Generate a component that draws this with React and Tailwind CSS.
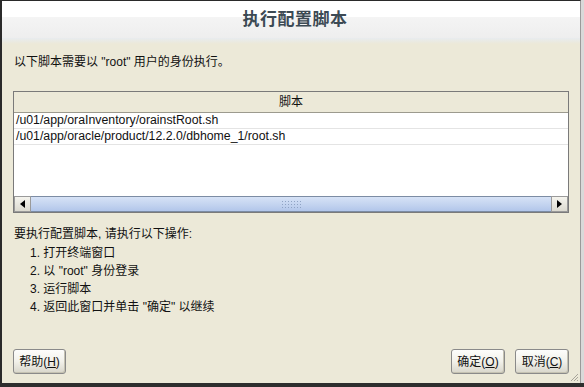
import React from 'react';

const font = { fontFamily: '"Liberation Sans", "Noto Sans CJK SC", sans-serif' };

const XpButton = ({ label, hotkey, className = '' }) => (
  <button
    className={`h-[25px] rounded-[3px] border border-[#8a8a8a] bg-gradient-to-b from-[#fdfdfb] via-[#f2f1ea] to-[#d8d6cb] text-[12px] text-[#111] shadow-[inset_-1px_-1px_0_#c5c2b2] ${className}`}
  >
    {label}(<span className="underline">{hotkey}</span>)
  </button>
);

const Arrow = ({ dir }) => (
  <div className="w-[17px] h-full flex items-center justify-center bg-gradient-to-b from-[#f5f4ee] to-[#dcdad0] border-[#9a9a9a] border">
    <svg width="5" height="8" viewBox="0 0 5 8">
      {dir === 'left' ? <path d="M5 0 L0 4 L5 8 Z" fill="#000" /> : <path d="M0 0 L5 4 L0 8 Z" fill="#000" />}
    </svg>
  </div>
);

export default function App() {
  const scripts = [
    '/u01/app/oraInventory/orainstRoot.sh',
    '/u01/app/oracle/product/12.2.0/dbhome_1/root.sh',
  ];

  return (
    <div className="w-[584px] h-[387px] bg-[#d9d9d9] overflow-hidden" style={font}>
      <div className="relative w-[581px] h-[383px] flex flex-col border-l-2 border-t border-[#2a2a2a] border-r border-r-[#9a9a9a] bg-[#ece9d8]">
        {/* Title */}
        <div className="h-[37px] flex flex-col bg-[#f1f1f1]">
          <div className="h-[16px] bg-white" />
          <div className="flex-1 bg-gradient-to-b from-[#f4f4f4] to-[#eeeeee]" />
          <div className="absolute top-0 left-0 right-0 h-[37px] flex items-center justify-center pl-[8px]">
            <span className="text-[17px] font-bold text-[#3c4a54] tracking-[0.5px]">执行配置脚本</span>
          </div>
        </div>
        <div className="h-[6px] bg-gradient-to-b from-[#e8ecef] to-[#ece9d8]" />

        {/* Body */}
        <div className="flex-1 flex flex-col px-[11px] pt-[10px] pb-[9px]">
          <p className="text-[12px] leading-[16px] text-[#111] pl-[1px]">以下脚本需要以 "root" 用户的身份执行。</p>

          <div className="mt-[21px] h-[122px] flex flex-col border border-[#7a7a7a] bg-white">
            <div className="h-[21px] flex items-center justify-center bg-[#ece9d8] border-b border-[#9c9a8e] text-[12px] text-[#111]">
              脚本
            </div>
            {scripts.map((s) => (
              <div key={s} className="h-[16px] flex items-center px-[2px] border-b border-[#e4e4e4] text-[12.3px] text-[#111]">
                {s}
              </div>
            ))}
            <div className="flex-1" />
            <div className="h-[16px] flex">
              <Arrow dir="left" />
              <div className="flex-1 flex items-center justify-center border-y border-[#7c8ca4] bg-gradient-to-b from-[#d6e2f6] via-[#c5d5f0] to-[#b2c6ea]">
                <div className="w-[20px] h-[8px] bg-[radial-gradient(#8fa3c4_40%,transparent_45%)] bg-[length:3px_3px]" />
              </div>
              <Arrow dir="right" />
            </div>
          </div>

          <div className="mt-[12px] text-[12px] leading-[18px] text-[#111]">
            <p className="pl-[1px] mb-[1px]">要执行配置脚本, 请执行以下操作:</p>
            <ol className="pl-[17px]">
              <li>1. 打开终端窗口</li>
              <li>2. 以 "root" 身份登录</li>
              <li>3. 运行脚本</li>
              <li>4. 返回此窗口并单击 "确定" 以继续</li>
            </ol>
          </div>

          <div className="flex-1" />

          <div className="flex items-center">
            <XpButton label="帮助" hotkey="H" className="w-[53px]" />
            <div className="flex-1" />
            <XpButton label="确定" hotkey="O" className="w-[54px] mr-[10px]" />
            <XpButton label="取消" hotkey="C" className="w-[54px]" />
          </div>
        </div>

        <svg className="absolute right-[1px] bottom-[1px]" width="10" height="10" viewBox="0 0 10 10">
          <path d="M9 2 L2 9 M9 5 L5 9 M9 8 L8 9" stroke="#a7a49a" strokeWidth="1" />
        </svg>
      </div>
      <div className="h-[4px] bg-[#2e2e2e]" />
    </div>
  );
}
